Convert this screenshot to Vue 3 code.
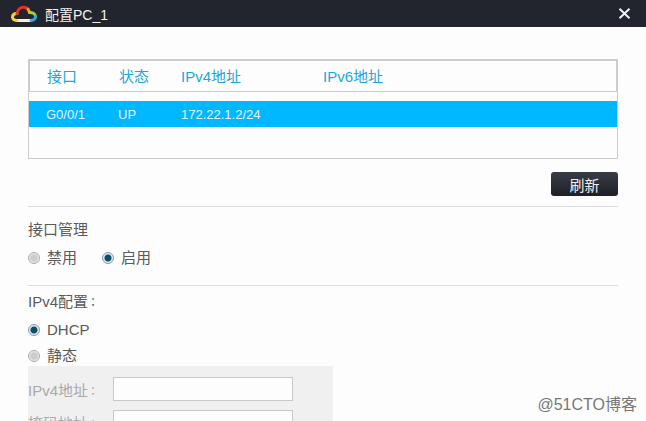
<script setup>
const columns = [
  { label: '接口', cls: 'c1' },
  { label: '状态', cls: 'c2' },
  { label: 'IPv4地址', cls: 'c3' },
  { label: 'IPv6地址', cls: 'c4' }
]
const row = [
  { label: 'G0/0/1', cls: 'c1' },
  { label: 'UP', cls: 'c2' },
  { label: '172.22.1.2/24', cls: 'c3' },
  { label: '', cls: 'c4' }
]
</script>

<template>
  <div class="page">
    <header class="titlebar">
      <svg class="logo" width="28" height="18" viewBox="0 0 28 18" fill="none" stroke-width="3" stroke-linecap="round">
        <path d="M21 15.5 L7 15.5" stroke="#f5f2e0" />
        <path d="M7 15.5 C3.5 15.5 2 13.5 2.6 11.2 C3.2 9.2 5 8.4 7 8.6" stroke="#f4d23a" />
        <path d="M7 8.6 C7.5 4.5 10.5 2 14 2.2 C15.5 2.3 17 3 18 4.2" stroke="#e8312a" />
        <path d="M18 4.2 C18.8 5.2 19.2 6.2 19.4 7.4" stroke="#f0a020" />
        <path d="M19.4 7.4 C22.8 7.2 25.4 8.8 25.5 11.6" stroke="#a8d030" />
        <path d="M25.5 11.6 C25.5 14 23.6 15.5 21 15.5" stroke="#30a8e0" />
      </svg>
      <span class="title">配置PC_1</span>
      <svg class="close" width="13" height="11" viewBox="0 0 13 11">
        <path d="M1.5 0.8 L11.5 10.2 M11.5 0.8 L1.5 10.2" stroke="#f2f2f2" stroke-width="2" />
      </svg>
    </header>

    <main class="content">
      <section class="table">
        <div class="thead">
          <span v-for="c in columns" :key="c.cls" :class="c.cls">{{ c.label }}</span>
        </div>
        <div class="tbody">
          <div class="row">
            <span v-for="c in row" :key="c.cls" :class="c.cls">{{ c.label }}</span>
          </div>
        </div>
      </section>

      <div class="actions"><button class="refresh">刷新</button></div>
      <hr class="divider first" />

      <div class="heading">接口管理</div>
      <div class="radios">
        <label class="radio"><i class="dot"></i>禁用</label>
        <label class="radio second"><i class="dot on"></i>启用</label>
      </div>
      <hr class="divider second-line" />

      <div class="heading ipv4">IPv4配置<span class="colon">：</span></div>
      <label class="radio dhcp"><i class="dot on"></i>DHCP</label>
      <label class="radio static"><i class="dot"></i>静态</label>

      <section class="panel">
        <div class="field"><span class="lbl">IPv4地址<span class="colon">：</span></span><div class="input"></div></div>
        <div class="field"><span class="lbl">掩码地址<span class="colon">：</span></span><div class="input"></div></div>
      </section>
    </main>

    <div class="watermark">@51CTO博客</div>
  </div>
</template>

<style>
html, body { margin: 0; background: #fdfdfd; overflow: hidden; }
</style>

<style scoped>
.page {
  position: relative;
  width: 646px;
  height: 421px;
  overflow: hidden;
  background: #fdfdfd;
  font-family: "Liberation Sans", "Noto Sans CJK SC", sans-serif;
  color: #5a5a5a;
  font-size: 15px;
}
.colon { font-family: "Noto Sans CJK TC", sans-serif; font-size: 10px; font-weight: 700; vertical-align: 1px; line-height: 1; }
.titlebar {
  height: 27px;
  background: #22252e;
  display: flex;
  align-items: center;
  padding: 0 15px 0 10px;
  box-sizing: border-box;
}
.logo { flex: none; }
.title { color: #f0f0f0; font-size: 14px; margin-left: 7px; }
.close { margin-left: auto; }
.content { padding: 32px 28px 0; }
.table { width: 590px; height: 100px; box-sizing: border-box; border: 1px solid #ccc; }
.thead {
  height: 32px;
  box-sizing: border-box;
  border: 1px solid #ccc;
  border-width: 1px 2px 1px 1px;
  margin: 0 -1px 0 0;
  padding-bottom: 1px;
  position: relative;
  display: flex;
  align-items: center;
  color: #1ba8d8;
  font-size: 15px;
}
.tbody { padding-top: 9px; }
.row {
  height: 26px;
  box-sizing: border-box;
  padding-top: 1px;
  background: #00b8ff;
  color: #eef;
  font-size: 13px;
  display: flex;
  align-items: center;
}
.c1, .c2, .c3, .c4 { display: block; flex: none; }
.thead .c1 { margin-left: 17px; width: 72px; }
.thead .c2 { width: 62px; }
.thead .c3 { width: 142px; }
.row .c1 { margin-left: 17px; width: 72px; }
.row .c2 { width: 63px; }
.row .c3 { width: 142px; }
.actions { display: flex; justify-content: flex-end; margin-top: 13px; }
.refresh {
  width: 67px;
  height: 24px;
  padding: 0;
  border: 0;
  border-radius: 3px;
  background: linear-gradient(#383c45, #1d2027);
  color: #eee;
  font: 15px "Liberation Sans", "Noto Sans CJK SC", sans-serif;
}
.divider { border: 0; height: 1px; background: #ddd; margin: 0; }
.divider.first { margin-top: 10px; }
.heading { font-size: 15px; height: 20px; line-height: 20px; color: #5a5a5a; }
.divider.first + .heading { margin-top: 13px; }
.radios { display: flex; margin-top: 8px; }
.radio { display: flex; align-items: center; font-size: 15px; height: 20px; line-height: 20px; color: #5a5a5a; }
.radio.second { margin-left: 25px; }
.dot {
  width: 12px;
  height: 12px;
  box-sizing: border-box;
  border-radius: 50%;
  border: 1px solid #aaa;
  background: radial-gradient(circle, #ccc 0 3px, #eee 5px);
  margin-right: 7px;
  flex: none;
}
.dot.on {
  border-color: #8a9ab0;
  background: radial-gradient(circle, #0d4f66 0 3px, #dfe8f2 4px);
}
.divider.second-line { margin-top: 17px; }
.heading.ipv4 { margin-top: 6px; }
.dhcp { margin-top: 8px; }
.static { margin-top: 6px; }
.panel {
  width: 305px;
  height: 60px;
  background: #f0f0f0;
  padding-top: 11px;
  box-sizing: border-box;
}
.field { display: flex; align-items: center; height: 24px; margin-bottom: 9px; color: #aaa; font-size: 15px; }
.lbl { width: 85px; flex: none; white-space: nowrap; }
.input { width: 180px; height: 24px; box-sizing: border-box; border: 1px solid #c8c8c8; background: #fdfdfd; }
.watermark {
  position: absolute;
  right: 9px;
  bottom: 6px;
  font-size: 16px;
  color: #777;
}
</style>
